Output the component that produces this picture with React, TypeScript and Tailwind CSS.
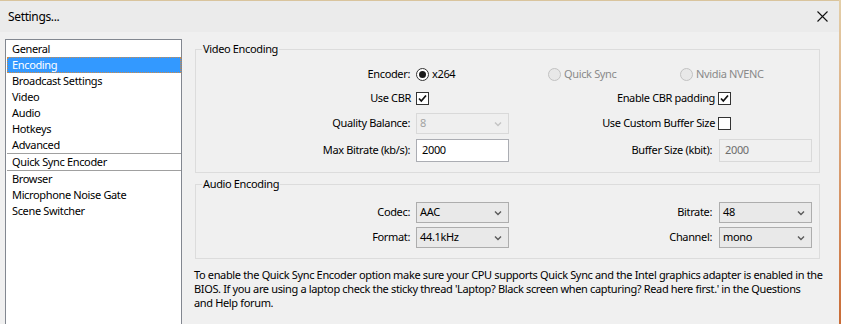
import React from 'react';

const listItems = [
  'General',
  'Encoding',
  'Broadcast Settings',
  'Video',
  'Audio',
  'Hotkeys',
  'Advanced',
];

const pluginItems = ['Browser', 'Microphone Noise Gate', 'Scene Switcher'];

const Chevron = ({ disabled }: { disabled?: boolean }) => (
  <svg width="8" height="6" viewBox="0 0 8 6" className="shrink-0">
    <path
      d="M1 1.5l3 3 3-3"
      fill="none"
      stroke={disabled ? '#c4c4c4' : '#5a5a5a'}
      strokeWidth="1.4"
    />
  </svg>
);

const Radio = ({ label, checked, disabled }: { label: string; checked?: boolean; disabled?: boolean }) => (
  <div className="flex items-center gap-[3px]">
    <span
      className={`w-[13px] h-[13px] rounded-full border flex items-center justify-center ${
        disabled ? 'border-[#c2c2c2] bg-[#e8e8e8]' : 'border-[#333333] bg-white'
      }`}
    >
      {checked && <span className="w-[7px] h-[7px] rounded-full bg-[#1a1a1a]" />}
    </span>
    <span className={disabled ? 'text-[#8a8a8a]' : 'text-black'}>{label}</span>
  </div>
);

const Checkbox = ({ checked }: { checked?: boolean }) => (
  <span className="w-[13px] h-[13px] border border-[#333333] bg-white flex items-center justify-center">
    {checked && (
      <svg width="11" height="11" viewBox="0 0 11 11">
        <path d="M2 5.5l2.3 2.5L9 2.5" fill="none" stroke="#111" strokeWidth="1.7" />
      </svg>
    )}
  </span>
);

const Select = ({ value, disabled }: { value: string; disabled?: boolean }) => (
  <div
    className={`w-[93px] h-[21px] border flex items-center justify-between pl-[3px] pr-[6px] ${
      disabled ? 'border-[#d9d9d9] bg-[#efefef] text-[#a3a3a3]' : 'border-[#adadad] bg-[#e9e9e9] text-black'
    }`}
  >
    <span>{value}</span>
    <Chevron disabled={disabled} />
  </div>
);

const TextBox = ({ value, disabled }: { value: string; disabled?: boolean }) => (
  <div
    className={`w-[93px] h-[23px] border flex items-center pl-[5px] ${
      disabled ? 'border-[#d9d9d9] bg-[#f0f0f0] text-[#6d6d6d]' : 'border-[#abadb3] bg-white text-black'
    }`}
  >
    {value}
  </div>
);

const Label = ({ children, pr = 'pr-[6px]' }: { children: React.ReactNode; pr?: string }) => (
  <div className={`text-right ${pr}`}>{children}</div>
);

const GroupBox = ({ title, className, children }: { title: string; className: string; children: React.ReactNode }) => (
  <div className={`relative border border-[#dcdcdc] ${className}`}>
    <span className="absolute -top-[9px] left-[6px] bg-[#f0f0f0] px-[1px] leading-[16px]">{title}</span>
    {children}
  </div>
);

const rowGrid = 'grid grid-cols-[220px_93px_210px_93px] items-center';

export default function App() {
  return (
    <div className="w-[841px] h-[324px] flex overflow-hidden bg-gradient-to-b from-[#e3cfa9] to-[#c96b35] font-['Noto_Sans',sans-serif] text-[11px] tracking-[-0.35px] text-black">
      <div className="w-[839px] h-full flex flex-col bg-[#f0f0f0] border-t border-[#d9c49d]">
        {/* Title bar */}
        <div className="h-[31px] shrink-0 bg-[#ebebeb] flex items-center justify-between pl-[8px] pr-[11px]">
          <span className="text-[12px]">Settings...</span>
          <svg width="11" height="11" viewBox="0 0 11 11">
            <path d="M0.5 0.5l10 10M10.5 0.5l-10 10" stroke="#111" strokeWidth="1.1" />
          </svg>
        </div>

        <div className="flex flex-1 pl-[5px] pt-[7px] gap-[13px]">
          {/* Settings list */}
          <div className="w-[177px] h-[300px] shrink-0 border border-[#828790] bg-white pl-[1px] pt-[1px] leading-[16px]">
            {listItems.map((item) => (
              <div
                key={item}
                className={`h-[16px] pl-[5px] ${
                  item === 'Encoding'
                    ? 'bg-[#3399ff] text-white outline-1 outline-dotted outline-[#d08a45] -outline-offset-1'
                    : ''
                }`}
              >
                {item}
              </div>
            ))}
            <div className="h-px bg-[#a0a0a0]" />
            <div className="h-[16px] pl-[5px]">Quick Sync Encoder</div>
            <div className="h-px bg-[#a0a0a0]" />
            {pluginItems.map((item) => (
              <div key={item} className="h-[16px] pl-[5px]">
                {item}
              </div>
            ))}
          </div>

          {/* Encoding panel */}
          <div className="w-[625px] flex flex-col pt-[10px]">
            <GroupBox title="Video Encoding" className="h-[124px] pt-[14px]">
              <div className={`${rowGrid} h-[20px]`}>
                <Label>Encoder:</Label>
                <div className="col-span-3 flex">
                  <div className="w-[132px]">
                    <Radio label="x264" checked />
                  </div>
                  <div className="w-[132px]">
                    <Radio label="Quick Sync" disabled />
                  </div>
                  <Radio label="Nvidia NVENC" disabled />
                </div>
              </div>
              <div className={`${rowGrid} h-[20px] mt-[4px]`}>
                <Label pr="pr-[5px]">Use CBR</Label>
                <Checkbox checked />
                <Label pr="pr-[4px]">Enable CBR padding</Label>
                <div className="-ml-[1px]">
                  <Checkbox checked />
                </div>
              </div>
              <div className={`${rowGrid} h-[21px] mt-[5px]`}>
                <Label>Quality Balance:</Label>
                <Select value="8" disabled />
                <Label pr="pr-[4px]">Use Custom Buffer Size</Label>
                <div className="-ml-[1px]">
                  <Checkbox />
                </div>
              </div>
              <div className={`${rowGrid} h-[23px] mt-[5px]`}>
                <Label>Max Bitrate (kb/s):</Label>
                <TextBox value="2000" />
                <Label pr="pr-[7px]">Buffer Size (kbit):</Label>
                <TextBox value="2000" disabled />
              </div>
            </GroupBox>

            <GroupBox title="Audio Encoding" className="h-[75px] mt-[11px] pt-[17px]">
              <div className={`${rowGrid} h-[21px]`}>
                <Label>Codec:</Label>
                <Select value="AAC" />
                <Label pr="pr-[7px]">Bitrate:</Label>
                <Select value="48" />
              </div>
              <div className={`${rowGrid} h-[21px] mt-[4px]`}>
                <Label>Format:</Label>
                <Select value="44.1kHz" />
                <Label pr="pr-[7px]">Channel:</Label>
                <Select value="mono" />
              </div>
            </GroupBox>

            <p className="mt-[9px] -ml-[1px] leading-[14px] whitespace-nowrap">
              To enable the Quick Sync Encoder option make sure your CPU supports Quick Sync and the Intel graphics adapter is enabled in the
              <br />
              BIOS. If you are using a laptop check the sticky thread 'Laptop? Black screen when capturing? Read here first.' in the Questions
              <br />
              and Help forum.
            </p>
          </div>
        </div>
      </div>
      <div className="w-[2px] h-full" />
    </div>
  );
}
